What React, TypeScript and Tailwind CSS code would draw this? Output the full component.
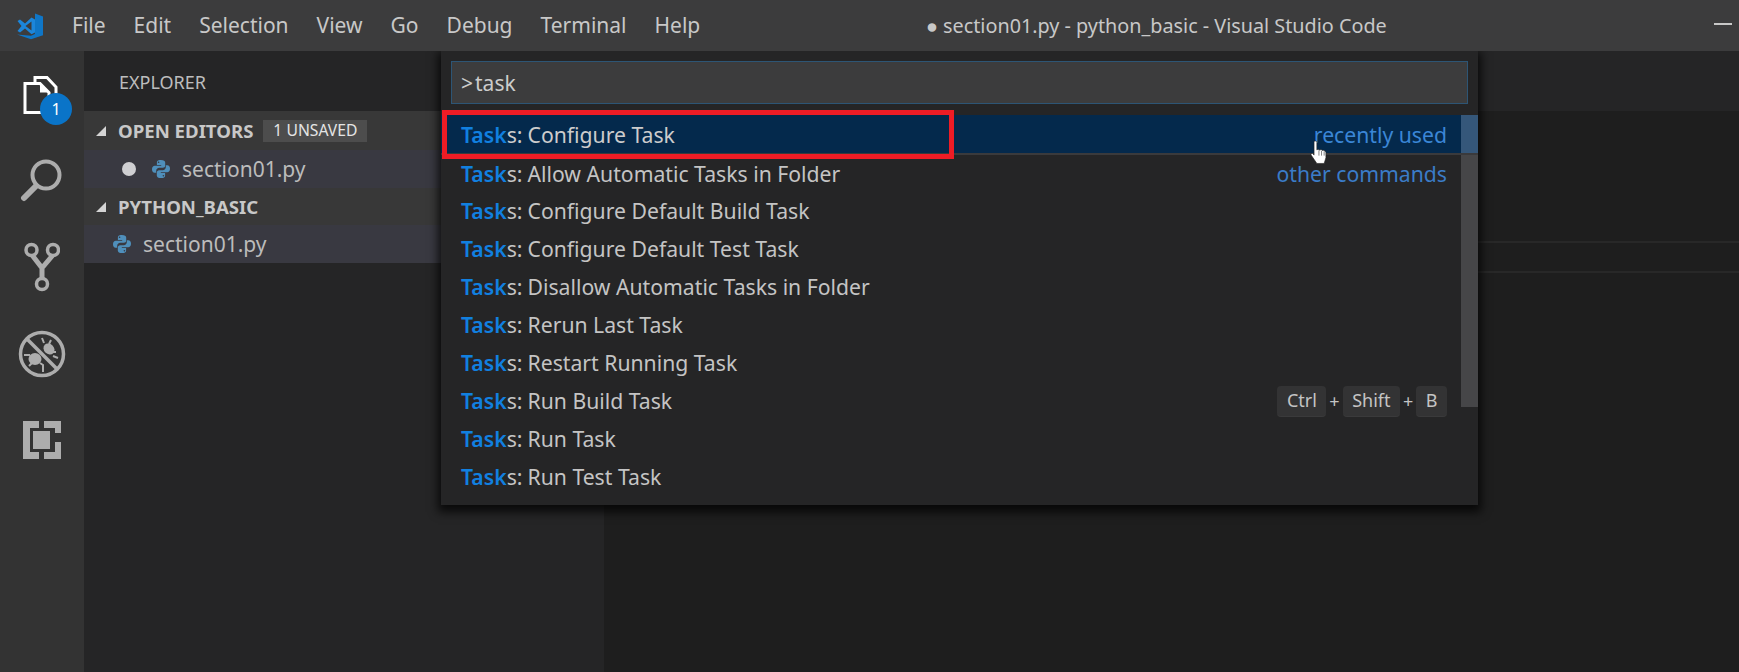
const font = "font-['Noto_Sans','Open_Sans',sans-serif]";

const menus = ["File", "Edit", "Selection", "View", "Go", "Debug", "Terminal", "Help"];

const tasks = [
  "Configure Task",
  "Allow Automatic Tasks in Folder",
  "Configure Default Build Task",
  "Configure Default Test Task",
  "Disallow Automatic Tasks in Folder",
  "Rerun Last Task",
  "Restart Running Task",
  "Run Build Task",
  "Run Task",
  "Run Test Task",
];

const PythonIcon = () => (
  <svg viewBox="0 0 20 20" className="w-[20px] h-[20px] shrink-0">
    <path
      fill="#4f8fbb"
      d="M9.8 1C6.5 1 5.9 2.3 5.9 3.6V6h4.3v.8H3.8C2.2 6.8 1 8.1 1 10.2c0 2.2 1 3.6 2.7 3.6h1.5v-2.1c0-1.5 1.3-2.9 3-2.9h3.7c1.3 0 2.3-1 2.3-2.3V3.6C14.200 2 12.800 1 9.800 1zM7.600 2.500a.8.8 0 1 1 0 1.600.8.8 0 0 1 0-1.600z"
    />
    <path
      fill="#4f8fbb"
      d="M10.200 19c3.300 0 3.900-1.300 3.900-2.600V14H9.800v-.8h6.400c1.600 0 2.800-1.300 2.800-3.400 0-2.200-1-3.600-2.700-3.600h-1.500v2.100c0 1.500-1.300 2.900-3 2.900H8.100c-1.300 0-2.300 1-2.300 2.300v2.900C5.800 18 7.200 19 10.200 19zm2.200-1.500a.8.8 0 1 1 0-1.600.8.8 0 0 1 0 1.600z"
    />
  </svg>
);

const Caret = () => (
  <svg viewBox="0 0 10 10" className="w-[10px] h-[10px] shrink-0">
    <path fill="#d4d4d4" d="M10 0v10H0z" />
  </svg>
);

const Key = ({ label }: { label: string }) => (
  <span className="h-[31px] flex items-center justify-center px-[9.500px] rounded-[4px] bg-[#333334] border-b border-[#3a3a3b] text-[#c4c4c4]">
    {label}
  </span>
);

const TitleBar = () => (
  <div className="relative z-10 h-[51px] shrink-0 bg-[#3c3c3d] flex items-center">
    <svg viewBox="0 0 28 28" className="w-[28px] h-[28px] ml-[16px] shrink-0">
      <path fill="#0f76c7" d="M19 1.500 27 4.500v18.800L15 27.200 1 22.400l14 1.300 3.900-1.700z" />
      <path fill="#1c86db" d="M1.500 9 4 7.500l5 4L15.500 5.500 19 7.500v13l-3.500 1.800L9 16.500l-5 4-2.500-1.500 4-5z M9.500 14l6 4.500v-9z" fillRule="evenodd" />
    </svg>
    <div className="flex items-center gap-[28px] ml-[28px] text-[21px] text-[#c8c8c8]">
      {menus.map((m) => (
        <span key={m}>{m}</span>
      ))}
    </div>
    <div className="absolute left-[926px] text-[19.800px] text-[#c8c8c8]">● section01.py - python_basic - Visual Studio Code</div>
    <div className="absolute right-[7px] top-[23px] w-[18px] h-[2px] bg-[#c8c8c8]" />
  </div>
);

const ActivityBar = () => (
  <div className="w-[84px] shrink-0 bg-[#333333] flex flex-col items-center">
    <div className="relative h-[108px] w-full shrink-0">
      <svg viewBox="0 0 36 40" className="absolute left-[23px] top-[24px] w-[36px] h-[40px]">
        <path fill="none" stroke="#ffffff" strokeWidth="3" d="M12 8V2.500h12L33 12v16h-5" />
        <path fill="none" stroke="#ffffff" strokeWidth="3" d="M2 8.500h15l9 9v20H2z" />
        <path fill="#ffffff" d="M17 8.500v9h9z" />
      </svg>
      <div className="absolute left-[40px] top-[42px] w-[32px] h-[32px] rounded-full bg-[#0a74c8] flex items-center justify-center text-[16px] text-white">
        1
      </div>
    </div>
    <svg viewBox="0 0 44 44" className="w-[44px] h-[44px] shrink-0">
      <circle cx="26" cy="16" r="13.500" fill="none" stroke="#adadad" strokeWidth="4" />
      <path stroke="#adadad" strokeWidth="6" strokeLinecap="round" d="M16 27 4 39" />
    </svg>
    <svg viewBox="0 0 36 50" className="w-[36px] h-[50px] mt-[39px] shrink-0">
      <circle cx="7.500" cy="8" r="5.500" fill="none" stroke="#adadad" strokeWidth="3.500" />
      <circle cx="29" cy="8" r="5.500" fill="none" stroke="#adadad" strokeWidth="3.500" />
      <circle cx="18" cy="42" r="5.500" fill="none" stroke="#adadad" strokeWidth="3.500" />
      <path fill="none" stroke="#adadad" strokeWidth="5" d="M8 13 18 26M29 13 18 26M18 26v11" />
    </svg>
    <svg viewBox="0 0 48 48" className="w-[48px] h-[48px] mt-[38px] shrink-0">
      <circle cx="24" cy="24" r="21.500" fill="none" stroke="#adadad" strokeWidth="3.500" />
      <path stroke="#adadad" strokeWidth="3.500" d="M9 9l30 30" />
      <ellipse cx="31" cy="19" rx="6" ry="5" fill="#adadad" transform="rotate(45 31 19)" />
      <ellipse cx="17" cy="29" rx="6.500" ry="6" fill="#adadad" />
      <path fill="none" stroke="#adadad" strokeWidth="2" d="M24 8l2 5M33 10l-2 4M38 22h-4M6 25h6M11 36l4-4M25 42v-7l-3-2M40 28l-5-2" />
    </svg>
    <svg viewBox="0 0 38 38" className="w-[38px] h-[38px] mt-[43px] shrink-0">
      <path fill="#adadad" fillRule="evenodd" d="M0 0h16v7H7v24h9v7H0z" />
      <path fill="#adadad" d="M21 0h17v12h-6V7H21zM21 31h11V21h6v17H21z" />
      <path fill="#adadad" d="M10 10h17v18H10z" />
    </svg>
  </div>
);

const SideBar = () => (
  <div className="w-[520px] shrink-0 bg-[#252526] flex flex-col">
    <div className="h-[60px] shrink-0 flex items-center pl-[35px] pt-[2px] text-[18px] text-[#bdbdbd]">EXPLORER</div>
    <div className="h-[39px] shrink-0 bg-[#383838] flex items-center pl-[12px]">
      <Caret />
      <span className="ml-[12px] text-[18.600px] font-bold text-[#c8c8c8]">OPEN EDITORS</span>
      <span className="ml-[10px] w-[104px] h-[22px] bg-[#4d4d4d] flex items-center justify-center text-[15.700px] text-[#e4e4e4]">1 UNSAVED</span>
    </div>
    <div className="h-[38px] shrink-0 bg-[#393941] flex items-center pl-[38px] text-[21px] text-[#bcbcbc]">
      <span className="w-[14px] h-[14px] rounded-full bg-[#cfcfd2]" />
      <span className="ml-[15px]">
        <PythonIcon />
      </span>
      <span className="ml-[11px] pt-[2px]">section01.py</span>
    </div>
    <div className="h-[37px] shrink-0 bg-[#383838] flex items-center pl-[12px]">
      <Caret />
      <span className="ml-[12px] text-[18.600px] font-bold text-[#c8c8c8]">PYTHON_BASIC</span>
    </div>
    <div className="h-[38px] shrink-0 bg-[#393941] flex items-center pl-[28px] text-[21px] text-[#bcbcbc]">
      <PythonIcon />
      <span className="ml-[11px] pt-[2px]">section01.py</span>
    </div>
  </div>
);

const Editor = () => (
  <div className="flex-1 bg-[#1e1e1e] flex flex-col">
    <div className="h-[60px] shrink-0 bg-[#252526]" />
    <div className="h-[132px] shrink-0 border-b-[2px] border-[#282828]" />
    <div className="h-[30px] shrink-0 border-b-[2px] border-[#282828]" />
  </div>
);

const Palette = () => (
  <div className="absolute left-[441px] top-[51px] w-[1037px] h-[454px] bg-[#252526] shadow-[0_4px_9px_3px_rgba(0,0,0,0.75)] flex flex-col">
    <div className="shrink-0 px-[10px] pt-[10px] pb-[11px]">
      <div className="h-[43px] border border-[#2d5575] bg-[#3c3c3d] flex items-center pl-[9px] pt-[3px] text-[21px] text-[#cccccc]">
        <span className="mr-[2px]">&gt;</span>task
      </div>
    </div>
    <div className="relative flex-1">
      <div className="absolute right-0 top-0 w-[17px] h-[292px] bg-[#4a4a4c]/90" />
      {tasks.map((task, i) => (
        <div
          key={task}
          className={
            i === 0
              ? "h-[38px] bg-[#04294c] flex items-center pl-[20px] pr-[31px] pt-[2px] text-[21.200px] text-[#cccccc]"
              : i === 1
                ? "h-[38px] flex items-center pl-[20px] pr-[31px] pt-[4px] text-[21.200px] text-[#c4c4c4]"
                : "h-[38px] flex items-center pl-[20px] pr-[31px] pt-[2px] text-[21.200px] text-[#c4c4c4]"
          }
        >
          <span className="flex">
            <b className="font-semibold text-[#1180e0]">Task</b>
            <span>s:</span>
            <span className="ml-[5px]">{task}</span>
          </span>
          {i === 0 && <span className="ml-auto text-[#3b86d6]">recently used</span>}
          {i === 1 && <span className="ml-auto text-[#3b7cc8]">other commands</span>}
          {i === 7 && (
            <span className="ml-auto flex items-center gap-[3px] text-[18px] text-[#c4c4c4]">
              <Key label="Ctrl" />
              <span>+</span>
              <Key label="Shift" />
              <span>+</span>
              <Key label="B" />
            </span>
          )}
        </div>
      ))}
      <div className="absolute right-0 top-0 w-[17px] h-[38px] bg-[#35577a]" />
      <div className="absolute left-0 right-0 top-[38px] h-[2px] bg-[#3a3a3c]" />
    </div>
    {/* annotation drawn over the first row */}
    <div className="absolute left-[1px] top-[59px] w-[512px] h-[49px] border-[5px] border-[#ee1c25]" />
    <svg viewBox="0 0 20 24" className="absolute left-[869px] top-[89px] w-[21px] h-[25px]">
      <path fill="#ffffff" stroke="#222222" strokeWidth="0.600" d="M5 1c1 0 1.500.6 1.500 1.500V9.500l.5-.3h1.200l.8.5.8-.3h1.200l.8.6 1-.1 1.500.6.9 1.500v5l-1.700 5.500H6.500L1 14.500c-.5-1.200.5-2 1.500-1.500L3.800 14.500V2.500C3.800 1.600 4 1 5 1z" />
      <path fill="none" stroke="#555555" strokeWidth="0.700" d="M8.500 10v5M11 10.500v4.500M13.500 11v4" />
    </svg>
  </div>
);

export default function App() {
  return (
    <div className={`relative w-[1739px] h-[672px] overflow-hidden bg-[#1e1e1e] flex flex-col ${font}`}>
      <TitleBar />
      <div className="flex-1 flex min-h-0">
        <ActivityBar />
        <SideBar />
        <Editor />
      </div>
      <Palette />
    </div>
  );
}
